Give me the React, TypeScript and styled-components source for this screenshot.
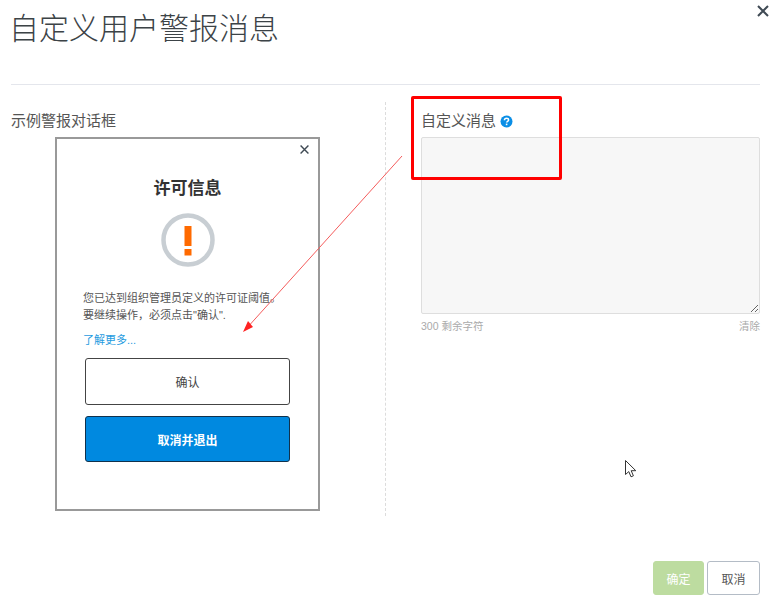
import React from "react";
import styled, { createGlobalStyle } from "styled-components";

const Global = createGlobalStyle`
  html, body { margin: 0; padding: 0; background: #fff; }
  body { font-family: "Liberation Sans", "Noto Sans CJK SC", sans-serif; color: #444; }
`;

const Page = styled.div`
  position: relative;
  width: 775px;
  height: 600px;
  overflow: hidden;
  box-sizing: border-box;
  padding: 0 15px 0 11px;
  background: #fff;
`;

const Header = styled.header`
  height: 85px;
  box-sizing: border-box;
  padding-top: 9px;
  border-bottom: 1px solid #e4e6ec;
`;

const Title = styled.h1`
  margin: 0 0 0 -2px;
  font-size: 30px;
  line-height: 40px;
  font-weight: 300;
  color: #3c4347;
`;

const CloseBtn = styled.button`
  position: absolute;
  top: 4px;
  right: 5px;
  width: 14px;
  height: 14px;
  padding: 0;
  border: 0;
  background: none;
  display: flex;
`;

const Body = styled.div`
  display: flex;
  height: 414px;
  margin-top: 17px;
`;

const LeftCol = styled.section`
  width: 374px;
  border-right: 1px dashed #dcdcdc;
  padding-top: 10px;
`;

const RightCol = styled.section`
  flex: 1;
  padding: 10px 0 0 35px;
`;

const Label = styled.div`
  display: flex;
  align-items: center;
  gap: 4px;
  height: 18px;
  font-size: 15px;
  line-height: 18px;
  color: #555;
`;

const Sample = styled.div`
  position: relative;
  box-sizing: border-box;
  width: 265px;
  height: 374px;
  margin: 7px 0 0 44px;
  border: 2px solid #999;
  padding: 0 28px;
  background: #fff;
`;

const SampleClose = styled.span`
  position: absolute;
  top: 5px;
  right: 8px;
  display: flex;
`;

const SampleTitle = styled.h2`
  margin: 0;
  padding-top: 40px;
  font-size: 17px;
  line-height: 20px;
  font-weight: 700;
  text-align: center;
  color: #333;
`;

const WarnWrap = styled.div`
  display: flex;
  justify-content: center;
  margin-top: 14px;
`;

const Message = styled.p`
  margin: 23px 0 0 -2px;
  font-size: 11px;
  line-height: 17px;
  color: #555;
  white-space: nowrap;
`;

const MoreLink = styled.a`
  display: block;
  margin: 8px 0 0 -2px;
  font-size: 11px;
  line-height: 16px;
  color: #1f9be0;
`;

const SampleBtn = styled.button<{ $primary?: boolean }>`
  display: block;
  box-sizing: border-box;
  width: 205px;
  height: ${(p) => (p.$primary ? 46 : 47)}px;
  margin-top: ${(p) => (p.$primary ? 11 : 10)}px;
  border: 1px solid ${(p) => (p.$primary ? "#10324d" : "#444")};
  border-radius: 3px;
  background: ${(p) => (p.$primary ? "#0089e0" : "#fff")};
  color: ${(p) => (p.$primary ? "#fff" : "#444")};
  font: inherit;
  font-size: 12px;
  font-weight: ${(p) => (p.$primary ? 700 : 400)};
`;

const HelpDot = styled.span`
  display: flex;
`;

const MessageBox = styled.textarea`
  display: block;
  box-sizing: border-box;
  width: 339px;
  height: 177px;
  margin: 7px 0 0;
  border: 1px solid #dedede;
  border-radius: 2px;
  background: #f7f7f7;
  outline: none;
`;

const MetaRow = styled.div`
  display: flex;
  justify-content: space-between;
  width: 339px;
  margin-top: 5px;
  font-size: 10.5px;
  line-height: 14px;
  color: #aaa;
`;

const Footer = styled.footer`
  display: flex;
  justify-content: flex-end;
  gap: 3px;
  margin-top: 45px;
`;

const FootBtn = styled.button<{ $ok?: boolean }>`
  box-sizing: border-box;
  width: ${(p) => (p.$ok ? 51 : 53)}px;
  height: 34px;
  border: 1px solid ${(p) => (p.$ok ? "#bddca0" : "#b4bcc6")};
  border-radius: 3px;
  background: ${(p) => (p.$ok ? "#bddca0" : "#fff")};
  color: ${(p) => (p.$ok ? "#fff" : "#555")};
  font: inherit;
  font-size: 12px;
  padding: 0;
`;

const RedBox = styled.div`
  position: absolute;
  left: 411px;
  top: 96px;
  box-sizing: border-box;
  width: 151px;
  height: 84px;
  border: 3px solid #f00;
  border-radius: 2px;
`;

const Arrow = styled.svg`
  position: absolute;
  left: 0;
  top: 0;
  pointer-events: none;
`;

const Cursor = styled.svg`
  position: absolute;
  left: 624px;
  top: 459px;
`;

const Cross = ({ size, width }: { size: number; width: number }) => (
  <svg width={size} height={size} viewBox="0 0 14 14">
    <path d="M2 2L12 12M12 2L2 12" stroke="#3f4a54" strokeWidth={width} fill="none" />
  </svg>
);

export default function App() {
  return (
    <Page>
      <Global />
      <Header>
        <Title>自定义用户警报消息</Title>
      </Header>
      <CloseBtn>
        <Cross size={14} width={2} />
      </CloseBtn>
      <Body>
        <LeftCol>
          <Label>示例警报对话框</Label>
          <Sample>
            <SampleClose>
              <Cross size={11} width={1.8} />
            </SampleClose>
            <SampleTitle>许可信息</SampleTitle>
            <WarnWrap>
              <svg width="54" height="54" viewBox="0 0 54 54">
                <circle cx="27" cy="27" r="24.5" fill="none" stroke="#c8ced3" strokeWidth="4.5" />
                <rect x="23.5" y="13" width="7" height="20" fill="#ff6a00" />
                <rect x="23.5" y="36" width="7" height="6.5" fill="#ff6a00" />
              </svg>
            </WarnWrap>
            <Message>
              您已达到组织管理员定义的许可证阈值。
              <br />
              要继续操作，必须点击"确认".
            </Message>
            <MoreLink>了解更多...</MoreLink>
            <SampleBtn>确认</SampleBtn>
            <SampleBtn $primary>取消并退出</SampleBtn>
          </Sample>
        </LeftCol>
        <RightCol>
          <Label>
            自定义消息
            <HelpDot>
              <svg width="13" height="13" viewBox="0 0 13 13">
                <circle cx="6.5" cy="6.5" r="6" fill="#0a8ee6" />
                <path d="M4.4 5.2C4.5 3.9 5.4 3.3 6.5 3.3C7.7 3.3 8.6 4 8.6 5C8.6 6.3 6.6 6.3 6.6 7.6" fill="none" stroke="#fff" strokeWidth="1.5" />
                <rect x="5.8" y="8.6" width="1.6" height="1.6" fill="#fff" />
              </svg>
            </HelpDot>
          </Label>
          <MessageBox readOnly />
          <MetaRow>
            <span>300 剩余字符</span>
            <span>清除</span>
          </MetaRow>
        </RightCol>
      </Body>
      <Footer>
        <FootBtn $ok>确定</FootBtn>
        <FootBtn>取消</FootBtn>
      </Footer>
      <RedBox />
      <Arrow width="775" height="600" viewBox="0 0 775 600">
        <path d="M402 156L246 329" stroke="#f45c5c" strokeWidth="1" fill="none" />
        <path d="M243 332L248 321L253 327Z" fill="#f22" />
      </Arrow>
      <Cursor width="14" height="20" viewBox="0 0 14 20">
        <path d="M1.5 1.5V15.5L4.8 12.6L7 17.8L9.4 16.8L7.2 11.7H11.8Z" fill="#fff" stroke="#333" strokeWidth="1" strokeLinejoin="round" />
      </Cursor>
    </Page>
  );
}
